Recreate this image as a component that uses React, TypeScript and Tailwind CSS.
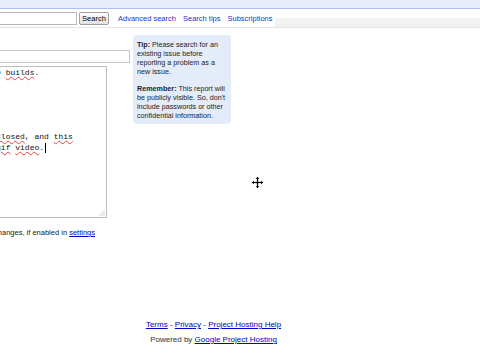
import { ReactNode } from 'react';

const sans = { fontFamily: '"Liberation Sans", Arial, sans-serif' };
const mono = { fontFamily: '"Liberation Mono", "Courier New", monospace' };

function Sp({ children }: { children: ReactNode }) {
    return <span className="underline decoration-wavy decoration-[#e84040] decoration-[0.5px] underline-offset-[1px]">{children}</span>;
}

function MoveCursor() {
    return (
        <svg width="13" height="13" viewBox="0 0 13 13" className="absolute left-[251px] top-[176px]">
            <path
                d="M6.5 0.5 L9 3 L7.5 3 L7.5 5.5 L10 5.5 L10 4 L12.5 6.5 L10 9 L10 7.5 L7.5 7.5 L7.5 10 L9 10 L6.5 12.5 L4 10 L5.5 10 L5.5 7.5 L3 7.5 L3 9 L0.5 6.5 L3 4 L3 5.5 L5.5 5.5 L5.5 3 L4 3 Z"
                fill="#000"
                stroke="#fff"
                strokeWidth="0.8"
            />
        </svg>
    );
}

export default function App() {
    return (
        <div className="relative w-[480px] h-[353px] overflow-hidden bg-white flex flex-col text-[#222]" style={sans}>
            {/* top band */}
            <div className="h-[9px] bg-[#e8edf9] border-b border-[#a9c1ee] shrink-0" />

            {/* search row */}
            <div className="h-[19px] flex items-start border-b border-[#e4e4e4] shrink-0">
                <div className="ml-[-3px] mt-[3px] w-[80px] h-[13px] border border-[#b8b8b8] bg-white" />
                <div className="ml-[2px] mt-[3px] w-[30px] h-[13px] border border-[#a0a0a0] rounded-[2px] bg-gradient-to-b from-white to-[#e2e2e2] flex items-center justify-center text-[7.5px] leading-none text-black">
                    Search
                </div>
                <div className="ml-[9px] mt-[3px] h-[13px] flex items-center gap-[7px] text-[7.5px] text-[#2233cc] whitespace-nowrap">
                    <span>Advanced search</span>
                    <span>Search tips</span>
                    <span>Subscriptions</span>
                </div>
                <div className="flex-1 self-end h-[9px] ml-[2px] bg-[#f2f2f2]" />
            </div>

            {/* main */}
            <div className="flex items-start mt-[7px]">
                <div className="ml-[-202px] w-[332px] pt-[15px] shrink-0">
                    <div className="w-[332px] h-[13px] border border-[#c6c6c6] bg-white" />
                    <div className="relative mt-[3px] w-[309px] h-[152px] border border-[#bdbdbd] bg-white pl-[5px] pt-[1px] text-[8px] leading-[10.67px] text-[#111] whitespace-pre overflow-hidden" style={mono}>
                        <div>Crash happens reliably on all of the 3.10 <Sp>builds</Sp>.</div>
                        <div> </div>
                        <div> </div>
                        <div> </div>
                        <div> </div>
                        <div> </div>
                        <div>After that the preference dialog is now <Sp>closed</Sp>, and <Sp>this</Sp></div>
                        <div>
                            window is captured in the attached demo <Sp>gif</Sp> <Sp>video</Sp>.
                            <span className="inline-block align-middle ml-[1px] w-px h-[10px] bg-black" />
                        </div>
                        <svg width="6" height="6" viewBox="0 0 6 6" className="absolute right-[1px] bottom-[1px]">
                            <rect x="4.5" y="0.5" width="1" height="1" fill="#aaa" />
                            <rect x="2.5" y="2.5" width="1" height="1" fill="#aaa" />
                            <rect x="4.5" y="2.5" width="1" height="1" fill="#aaa" />
                            <rect x="0.5" y="4.5" width="1" height="1" fill="#aaa" />
                            <rect x="2.5" y="4.5" width="1" height="1" fill="#aaa" />
                            <rect x="4.5" y="4.5" width="1" height="1" fill="#aaa" />
                        </svg>
                    </div>
                    <div className="mt-[10px] w-[297px] text-right text-[7.5px] leading-[10px] whitespace-nowrap text-[#222]">
                        Notify me about issue changes, if enabled in <span className="text-[#0000cc] underline">settings</span>
                    </div>
                </div>

                <div className="ml-[3px] w-[98px] rounded-[4px] bg-[#e5ecf9] px-[4px] pt-[5px] pb-[4px] text-[7.2px] leading-[9px] text-[#222] whitespace-nowrap">
                    <p>
                        <b>Tip:</b> Please search for an
                        <br />
                        existing issue before
                        <br />
                        reporting a problem as a
                        <br />
                        new issue.
                    </p>
                    <p className="mt-[8px]">
                        <b>Remember:</b> This report will
                        <br />
                        be publicly visible. So, don't
                        <br />
                        include passwords or other
                        <br />
                        confidential information.
                    </p>
                </div>
            </div>

            {/* footer */}
            <div className="mt-auto pb-[6px] w-[427px] text-center text-[8px] leading-[15px]">
                <div>
                    <span className="text-[#0000cc] underline">Terms</span> - <span className="text-[#0000cc] underline">Privacy</span> -{' '}
                    <span className="text-[#0000cc] underline">Project Hosting Help</span>
                </div>
                <div className="text-[#333]">
                    Powered by <span className="text-[#0000cc] underline">Google Project Hosting</span>
                </div>
            </div>

            <MoveCursor />
        </div>
    );
}
